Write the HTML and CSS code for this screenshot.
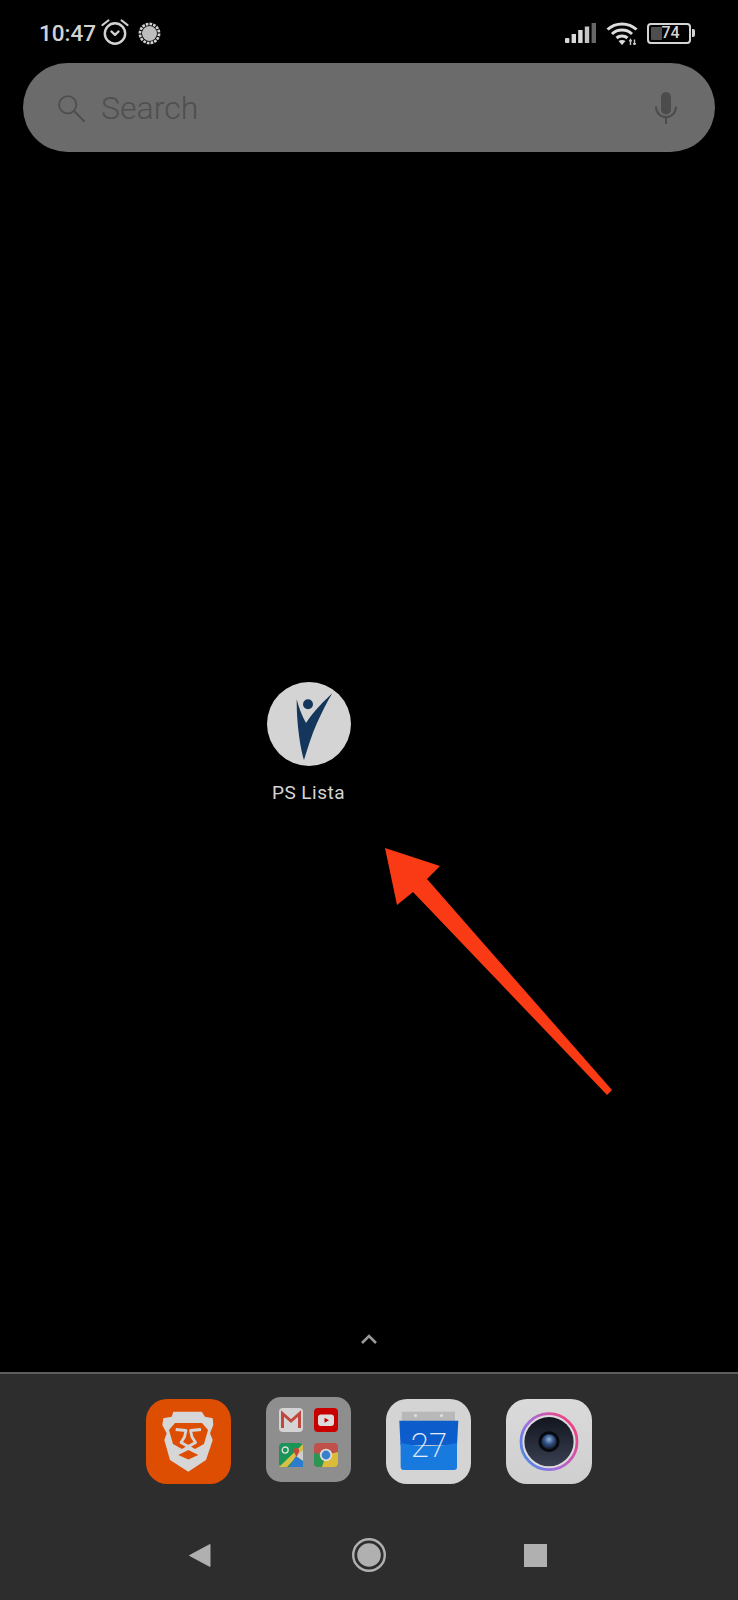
FILE: index.html
```html
<!DOCTYPE html>
<html lang="en">
<head>
<meta charset="utf-8">
<title>Home screen</title>
<link rel="stylesheet" href="styles.css">
</head>
<body>
<div class="screen">
  <header class="status">
    <div class="status-left">
      <span class="time">10:47</span>
      <svg class="alarm" viewBox="0 0 28 26"><circle cx="14" cy="14.500" r="10.200" fill="none" stroke="#d2d2d2" stroke-width="2.400"/><path d="M1.500 6 7.300 1.500M26.500 6 20.700 1.500" fill="none" stroke="#d2d2d2" stroke-width="2.200" stroke-linecap="round"/><path d="M10.500 12.500 14 15.800 17.500 12.500" fill="none" stroke="#d2d2d2" stroke-width="2.400" stroke-linecap="round" stroke-linejoin="round"/></svg>
      <svg class="gear" viewBox="0 0 24 24"><circle cx="12" cy="12" r="10" fill="none" stroke="#d4d4d4" stroke-width="2.800" stroke-dasharray="2.800 1.100"/><circle cx="12" cy="12" r="7.800" fill="#bdbdbd"/></svg>
    </div>
    <div class="status-right">
      <svg class="signal" viewBox="0 0 32 20"><rect x="0" y="15" width="4.400" height="5" rx="1" fill="#d8d8d8"/><rect x="6.600" y="11" width="4.400" height="9" fill="#d8d8d8"/><rect x="13.200" y="7" width="4.400" height="13" fill="#d8d8d8"/><rect x="19.800" y="3.500" width="4.400" height="16.500" fill="#c4c4c4"/><rect x="26.600" y="0" width="4.400" height="20" fill="#666"/></svg>
      <svg class="wifi" viewBox="0 0 32 24"><path d="M1.500 8.500C9.500 1 22.500 1 30.500 8.500" fill="none" stroke="#dcdcdc" stroke-width="3"/><path d="M6 13C11.500 7.800 20.500 7.800 26 13" fill="none" stroke="#dcdcdc" stroke-width="3"/><path d="M10.500 17C13.500 14.400 18.500 14.400 21.500 17" fill="none" stroke="#dcdcdc" stroke-width="3"/><path d="M12.500 20 16 24 19.500 20C17.500 18.600 14.500 18.600 12.500 20Z" fill="#dcdcdc"/><path d="M24.500 24V18.500M23.300 20.300 24.500 18.500 25.700 20.300M28.500 18.500V24M27.300 22.200 28.500 24 29.700 22.200" fill="none" stroke="#c8c8c8" stroke-width="1.400"/></svg>
      <div class="battery">
        <div class="battery-body"><span class="battery-level"></span><span class="battery-text">74</span></div>
        <span class="battery-nub"></span>
      </div>
    </div>
  </header>

  <div class="search">
    <svg class="search-icon" viewBox="0 0 32 32"><circle cx="12.500" cy="12.500" r="9.200" fill="none" stroke="#4e4e4e" stroke-width="2"/><path d="M19.500 19.500 30 30" stroke="#4e4e4e" stroke-width="2.200" stroke-linecap="round"/></svg>
    <span class="search-text">Search</span>
    <svg class="mic" viewBox="0 0 22 32"><rect x="6" y="0" width="10" height="22.500" rx="5" fill="#4c4c4c"/><path d="M1 14.500C1 21 5.500 25 11 25S21 21 21 14.500" fill="none" stroke="#4c4c4c" stroke-width="2"/><path d="M11 25V32" stroke="#4c4c4c" stroke-width="2"/></svg>
  </div>

  <main class="home">
    <div class="app">
      <svg class="app-icon" viewBox="0 0 84 84"><circle cx="42" cy="42" r="42" fill="#d4d4d4"/><path d="M29.700 17.300C29.500 40 33 65 37 78 41 65 45 52 50 41 55 30 60 20 65.300 11.300 57 19 47 29 39 41 35 34 32 26 29.700 17.300Z" fill="#14365c"/><circle cx="41" cy="22.300" r="5" fill="#14365c"/></svg>
      <span class="app-label">PS Lista</span>
    </div>
    <svg class="chevron" viewBox="0 0 18 12"><path d="M2 10 9 3 16 10" fill="none" stroke="#9a9a9a" stroke-width="2.600"/></svg>
    <svg class="arrow" viewBox="0 0 240 260"><polygon points="0,0 55,18 42,31 227,242 222,247 28,44 12,57" fill="#f93a14"/></svg>
  </main>

  <footer class="dock">
    <div class="dock-icons">
      <svg class="tile" viewBox="0 0 85 85"><rect width="85" height="85" rx="21" fill="#de4e02"/><path d="M27.300 12.700H55.700L59 17.700 66.700 19.300 67.300 26 64 34.300 66.700 41 60 61 42.300 72.700 24 61 18.300 41 20.700 34.300 16.300 26 17.300 19.300 25.700 17.700Z" fill="#d6d6d6"/><path d="M29 24H56L62 31 58 45 49 50 42.300 46 36 50 27 45 23 31Z" fill="#de4e02"/><path d="M29.700 30.500 40 31.500 38.500 38 35 43.500 42.300 47.500 49.600 43.500 46 38 44.600 31.500 55 30.500" fill="none" stroke="#d6d6d6" stroke-width="2.800" stroke-linejoin="round"/><path d="M32.300 56 42.300 51 52.300 56 42.300 60.500Z" fill="#de4e02"/></svg>

      <div class="folder">
        <svg class="mini" viewBox="0 0 24 24"><rect width="24" height="24" rx="4" fill="#d4d4d4"/><path d="M3.500 20V5.500L12 13 20.500 5.500V20" fill="none" stroke="#c0483f" stroke-width="3"/></svg>
        <svg class="mini" viewBox="0 0 24 24"><rect width="24" height="24" rx="4" fill="#c80000"/><rect x="4" y="6.500" width="16" height="11.500" rx="3" fill="#dcdcdc"/><path d="M10.500 9.800 15 12.300 10.500 14.800Z" fill="#c80000"/></svg>
        <svg class="mini" viewBox="0 0 24 24"><rect width="24" height="24" rx="4" fill="#1b9457"/><path d="M0 24 24 1V7L8 24Z" fill="#d8c048"/><path d="M10 24H24V18L17 13Z" fill="#2d7bcc"/><path d="M17 13 24 7V18Z" fill="#cfcfcf"/><circle cx="6.200" cy="7" r="3" fill="none" stroke="#dedede" stroke-width="1.300"/><path d="M17.500 5C15 5 14.500 7 15 9L17.500 14 20 9C20.500 7 20 5 17.500 5Z" fill="#c4473a"/></svg>
        <svg class="mini" viewBox="0 0 24 24"><rect width="24" height="24" rx="4" fill="#c0504a"/><path d="M0 10 12 12 8 24H4A4 4 0 0 1 0 20Z" fill="#2c9552"/><path d="M12 12 24 9V20A4 4 0 0 1 20 24H8Z" fill="#dcbb38"/><circle cx="12" cy="12" r="6.200" fill="#dcdcdc"/><circle cx="12" cy="12" r="4.400" fill="#3a80cc"/></svg>
      </div>

      <svg class="tile" viewBox="0 0 85 85"><rect width="85" height="85" rx="21" fill="#d4d4d4"/><rect x="15.700" y="12.700" width="53.300" height="10" fill="#b8b8b8"/><circle cx="29.500" cy="16.500" r="1.600" fill="#dedede"/><circle cx="55.500" cy="16.500" r="1.600" fill="#dedede"/><path d="M13.300 21.700H72.300L71 46H14.500Z" fill="#0d5ccb"/><path d="M14.500 44C33 48 52 48 71 44L71 68A3 3 0 0 1 68 71H17.700A3 3 0 0 1 14.700 68Z" fill="#187adf"/><text class="cal-day" x="43" y="58" text-anchor="middle">27</text></svg>

      <svg class="tile camera" viewBox="0 0 86 85"><defs><linearGradient id="ring" x1="0" y1="1" x2="1" y2="0.400"><stop offset="0" stop-color="#2f90e8"/><stop offset="0.450" stop-color="#a56fe0"/><stop offset="1" stop-color="#ea4488"/></linearGradient><radialGradient id="lens" cx="0.500" cy="0.350" r="0.650"><stop offset="0" stop-color="#9ab4d8"/><stop offset="0.500" stop-color="#2f5286"/><stop offset="1" stop-color="#141a28"/></radialGradient><linearGradient id="barrel" x1="0" y1="0" x2="0" y2="1"><stop offset="0" stop-color="#12151e"/><stop offset="1" stop-color="#3a4052"/></linearGradient><linearGradient id="body" x1="0" y1="0" x2="0" y2="1"><stop offset="0" stop-color="#dadada"/><stop offset="1" stop-color="#cfcfcf"/></linearGradient></defs><rect width="86" height="85" rx="21" fill="url(#body)"/><circle cx="43" cy="42.700" r="28" fill="#dcdcdc" stroke="url(#ring)" stroke-width="2.800"/><circle cx="43" cy="42.700" r="24.600" fill="url(#barrel)"/><circle cx="43" cy="42.700" r="10.500" fill="#08090e"/><circle cx="43" cy="42.700" r="7.500" fill="url(#lens)"/></svg>
    </div>
    <nav class="nav">
      <svg class="nav-back" viewBox="0 0 23 25"><path d="M22 1.500V23.500L1.500 12.500Z" fill="#b0b0b0" stroke="#b0b0b0" stroke-linejoin="round"/></svg>
      <svg class="nav-home" viewBox="0 0 34 34"><circle cx="17" cy="17" r="15.800" fill="none" stroke="#b0b0b0" stroke-width="2.400"/><circle cx="17" cy="17" r="11.800" fill="#b0b0b0"/></svg>
      <span class="nav-recent"></span>
    </nav>
  </footer>
</div>
</body>
</html>
```
FILE: styles.css
```css
* { box-sizing: border-box; }
html, body { margin: 0; padding: 0; background: #000; }
.screen {
  width: 738px;
  height: 1600px;
  display: flex;
  flex-direction: column;
  background: #000;
  font-family: Roboto, "Liberation Sans", sans-serif;
  overflow: hidden;
}

/* status bar */
.status {
  height: 63px;
  flex: none;
  display: flex;
  justify-content: space-between;
  align-items: center;
  padding: 3px 43px 0 39px;
}
.status-left, .status-right { display: flex; align-items: center; }
.time { font-size: 22.500px; font-weight: 500; color: #d2d2d2; line-height: 26px; }
.alarm { width: 28px; height: 26px; margin-left: 5px; margin-top: -2px; }
.gear { width: 23px; height: 23px; margin-left: 9px; }
.signal { width: 32px; height: 20px; }
.wifi { width: 32px; height: 24px; margin-left: 9px; }
.battery { display: flex; align-items: center; margin-left: 9px; }
.battery-body {
  position: relative;
  width: 44px;
  height: 21px;
  border: 2px solid #d4d4d4;
  border-radius: 4px;
  display: flex;
  align-items: center;
  justify-content: center;
}
.battery-level { position: absolute; left: 2px; top: 2px; bottom: 2px; width: 11px; background: #4e4e4e; border-radius: 1px; }
.battery-text { position: relative; font-size: 16px; font-weight: 500; color: #d4d4d4; line-height: 1; padding-left: 3px; }
.battery-nub { width: 3px; height: 8px; margin-left: 1px; background: #d4d4d4; border-radius: 0 2px 2px 0; }

/* search bar */
.search {
  flex: none;
  height: 89px;
  margin: 0 23px;
  display: flex;
  align-items: center;
  padding: 0 23px 0 33px;
  background: #6b6b6b;
  border-radius: 45px;
}
.search-icon { width: 30px; height: 30px; margin-top: 1px; }
.search-text { margin-left: 15px; font-size: 32px; font-weight: 300; color: #4f4f4f; line-height: 40px; }
.mic { width: 22px; height: 32px; margin-left: auto; margin-top: 1px; margin-right: 15px; }

/* home canvas */
.home {
  position: relative;
  flex: 1;
  min-height: 0;
  display: flex;
  flex-direction: column;
  padding: 530px 0 0 248px;
}
.app { width: 121px; display: flex; flex-direction: column; align-items: center; }
.app-icon { width: 84px; height: 84px; display: block; }
.app-label { margin-top: 15px; font-size: 19px; line-height: 24px; color: #d4d4d4; letter-spacing: 0.500px; }
.chevron { position: absolute; left: 360px; bottom: 27px; width: 18px; height: 12px; }
.arrow { position: absolute; left: 385px; top: 696px; width: 240px; height: 260px; }

/* dock */
.dock {
  flex: none;
  height: 228px;
  background: #2d2d2d;
  border-top: 2px solid #5e5e5e;
  display: flex;
  flex-direction: column;
}
.dock-icons {
  display: flex;
  justify-content: center;
  align-items: center;
  gap: 35px;
  padding-top: 25px;
  padding-right: 1px;
}
.tile { width: 85px; height: 85px; display: block; }
.camera { width: 86px; }
.folder {
  width: 85px;
  height: 85px;
  margin-top: -4px;
  padding: 11px 13px 15px;
  display: grid;
  grid-template-columns: 24px 24px;
  grid-template-rows: 24px 24px;
  justify-content: space-between;
  align-content: space-between;
  background: #8e8e8e;
  border-radius: 15px;
}
.mini { width: 24px; height: 24px; display: block; }
.cal-day { font-family: Roboto, sans-serif; font-size: 33px; font-weight: 200; fill: #e4eefa; }

/* nav */
.nav {
  margin-top: 54px;
  height: 34px;
  display: flex;
  align-items: center;
  padding-left: 188px;
}
.nav-back { width: 23px; height: 25px; display: block; }
.nav-home { width: 34px; height: 34px; display: block; margin-left: 141px; }
.nav-recent { width: 23px; height: 23px; margin-left: 138px; background: #b0b0b0; }
```
